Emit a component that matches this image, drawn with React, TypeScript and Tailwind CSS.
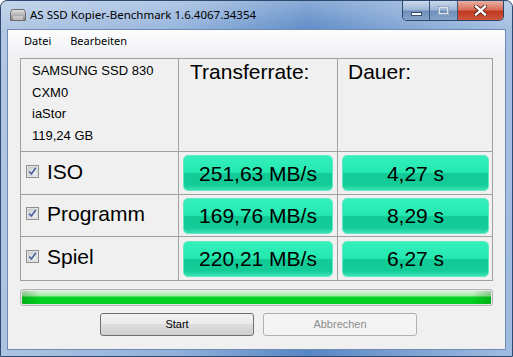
import React from 'react';

const rows = [
  { label: 'ISO', rate: '251,63 MB/s', time: '4,27 s' },
  { label: 'Programm', rate: '169,76 MB/s', time: '8,29 s' },
  { label: 'Spiel', rate: '220,21 MB/s', time: '6,27 s' },
];

function DriveIcon() {
  return (
    <svg width="16" height="14" viewBox="0 0 16 14">
      <defs>
        <linearGradient id="drv" x1="0" y1="0" x2="0" y2="1">
          <stop offset="0" stopColor="#e4e4e4" />
          <stop offset="0.6" stopColor="#a9a9a9" />
          <stop offset="1" stopColor="#7a7a7a" />
        </linearGradient>
      </defs>
      <path d="M2 1.5h12l1.5 3v8h-15v-8z" fill="url(#drv)" stroke="#6d6d6d" strokeWidth="1" />
      <path d="M3 9h10M3 11h10" stroke="#ededed" strokeWidth="1" />
    </svg>
  );
}

function WindowButtons() {
  return (
    <div className="mr-[8px] flex h-[20px] self-start overflow-hidden rounded-b-[5px] border border-t-0 border-[#2c4466]">
      <div className="flex w-[27px] items-end justify-center border-r border-[#3b5679] bg-[linear-gradient(180deg,#c9d8ec_0%,#9fb7d6_45%,#6f8fba_55%,#86a3c9_100%)] pb-[4px]">
        <svg width="11" height="4" viewBox="0 0 11 4">
          <rect x="0.5" y="0.5" width="10" height="3" fill="#ffffff" stroke="#3a4f6e" strokeWidth="1" />
        </svg>
      </div>
      <div className="flex w-[28px] items-center justify-center border-r border-[#3b5679] bg-[linear-gradient(180deg,#c9d8ec_0%,#9fb7d6_45%,#6f8fba_55%,#86a3c9_100%)]">
        <svg width="11" height="9" viewBox="0 0 11 9">
          <rect x="1" y="1" width="9" height="7" fill="none" stroke="#dfe6ef" strokeWidth="2" />
          <rect x="0.5" y="0.5" width="10" height="8" fill="none" stroke="#6a7f9c" strokeWidth="0.6" />
        </svg>
      </div>
      <div className="flex w-[45px] items-center justify-center bg-[linear-gradient(180deg,#eab0a3_0%,#d86e5a_45%,#c1391f_55%,#d0563c_100%)]">
        <svg width="13" height="11" viewBox="0 0 13 11">
          <path d="M2 1.5l9 8M11 1.5l-9 8" stroke="#4a1c12" strokeWidth="4" strokeLinecap="square" />
          <path d="M2 1.5l9 8M11 1.5l-9 8" stroke="#ffffff" strokeWidth="2.4" strokeLinecap="square" />
        </svg>
      </div>
    </div>
  );
}

function CheckBox() {
  return (
    <svg width="13" height="13" viewBox="0 0 13 13" className="shrink-0">
      <defs>
        <linearGradient id="cb" x1="0" y1="0" x2="1" y2="1">
          <stop offset="0" stopColor="#cbcfd5" />
          <stop offset="1" stopColor="#f7f7f7" />
        </linearGradient>
      </defs>
      <rect x="0.5" y="0.5" width="12" height="12" fill="#f4f4f4" stroke="#8f8f8f" />
      <rect x="2" y="2" width="9" height="9" fill="url(#cb)" stroke="#b9bcc1" strokeWidth="0.6" />
      <path d="M3.3 6.6l2.1 2.4 4.3-6" fill="none" stroke="#4b5f9a" strokeWidth="1.6" />
    </svg>
  );
}

function ResultBar({ value }: { value: string }) {
  return (
    <div className="flex h-[36px] w-full items-center justify-center rounded-[5px] border border-[#62e9c3] bg-[linear-gradient(180deg,#34f0bc_0%,#24e8b0_48%,#12ca96_52%,#14cc98_85%,#3ae3b6_100%)] pt-[1px] text-[21px] text-black">
      {value}
    </div>
  );
}

export default function App() {
  return (
    <div className="h-[357px] w-[513px] bg-white font-['Liberation_Sans',Arial,sans-serif]">
      <div className="flex h-full flex-col overflow-hidden rounded-t-[7px] border border-[#2f4a70] bg-[linear-gradient(180deg,rgba(255,255,255,0.3)_0%,rgba(255,255,255,0.05)_30px,rgba(255,255,255,0)_100%),linear-gradient(90deg,#adc4e2_0%,#90b0da_35%,#5686c4_60%,#7a9fd1_78%,#a0bce0_100%)]">
        {/* Title bar */}
        <div className="flex h-[28px] items-center">
          <div className="ml-[9px] mt-[-1px]">
            <DriveIcon />
          </div>
          <span className="ml-[4px] font-['Noto_Sans',sans-serif] text-[11.5px] text-black">
            AS SSD Kopier-Benchmark 1.6.4067.34354
          </span>
          <div className="flex-1" />
          <WindowButtons />
        </div>

        {/* Client area */}
        <div className="mx-[6px] mb-[6px] flex flex-1 flex-col border border-[#6d8bb3] bg-[#f0f0f0]">
          <div className="flex h-[22px] items-center gap-[19px] bg-[linear-gradient(180deg,#fdfdfe,#f2f3f6)] pl-[16px] font-['Noto_Sans',sans-serif] text-[11px] text-black">
            <span>Datei</span>
            <span>Bearbeiten</span>
          </div>

          <div className="ml-[12px] mt-[6px] grid w-[473px] grid-cols-[157px_158px_154px] grid-rows-[92px_42px_41px_43px] gap-px bg-[#a0a0a0] p-px">
            <div className="bg-[#f0f0f0] pl-[11px] pt-[1px] text-[13px] leading-[21.5px] text-black">
              <div>SAMSUNG SSD 830</div>
              <div>CXM0</div>
              <div>iaStor</div>
              <div>119,24 GB</div>
            </div>
            <div className="bg-[#f0f0f0] pl-[11px] pt-[1px] text-[21px] leading-[24px] text-black">
              Transferrate:
            </div>
            <div className="bg-[#f0f0f0] pl-[10px] pt-[1px] text-[21px] leading-[24px] text-black">
              Dauer:
            </div>
            {rows.map((r) => (
              <React.Fragment key={r.label}>
                <div className="flex items-center bg-[#f0f0f0] pb-[4px] pl-[5px]">
                  <CheckBox />
                  <span className="ml-[8px] text-[21px] leading-none text-black">{r.label}</span>
                </div>
                <div className="flex items-center bg-[#f0f0f0] px-[4px]">
                  <ResultBar value={r.rate} />
                </div>
                <div className="flex items-center bg-[#f0f0f0] pl-[4px] pr-[3px]">
                  <ResultBar value={r.time} />
                </div>
              </React.Fragment>
            ))}
          </div>

          <div className="ml-[12px] mt-[8px] h-[17px] w-[473px] rounded-[3px] border border-[#b4b4b4] bg-[#e6e6e6] p-px">
            <div className="h-full w-full rounded-[1px] bg-[linear-gradient(90deg,rgba(0,80,0,0.25)_0%,rgba(0,0,0,0)_4%,rgba(0,0,0,0)_96%,rgba(0,80,0,0.25)_100%),linear-gradient(180deg,#d8f7d8_0%,#a2eaa6_35%,#00d421_50%,#00cc1f_100%)]" />
          </div>

          <div className="ml-[92px] mt-[7px] flex gap-[9px] text-[11px]">
            <button className="flex h-[23px] w-[154px] items-center justify-center rounded-[3px] border border-[#707070] bg-[linear-gradient(180deg,#f2f2f2_0%,#ebebeb_45%,#dddddd_50%,#cfcfcf_100%)] text-black">
              Start
            </button>
            <button className="flex h-[23px] w-[154px] items-center justify-center rounded-[3px] border border-[#adb2b5] bg-[#f4f4f4] text-[#8d8d8d]">
              Abbrechen
            </button>
          </div>
        </div>
      </div>
    </div>
  );
}
